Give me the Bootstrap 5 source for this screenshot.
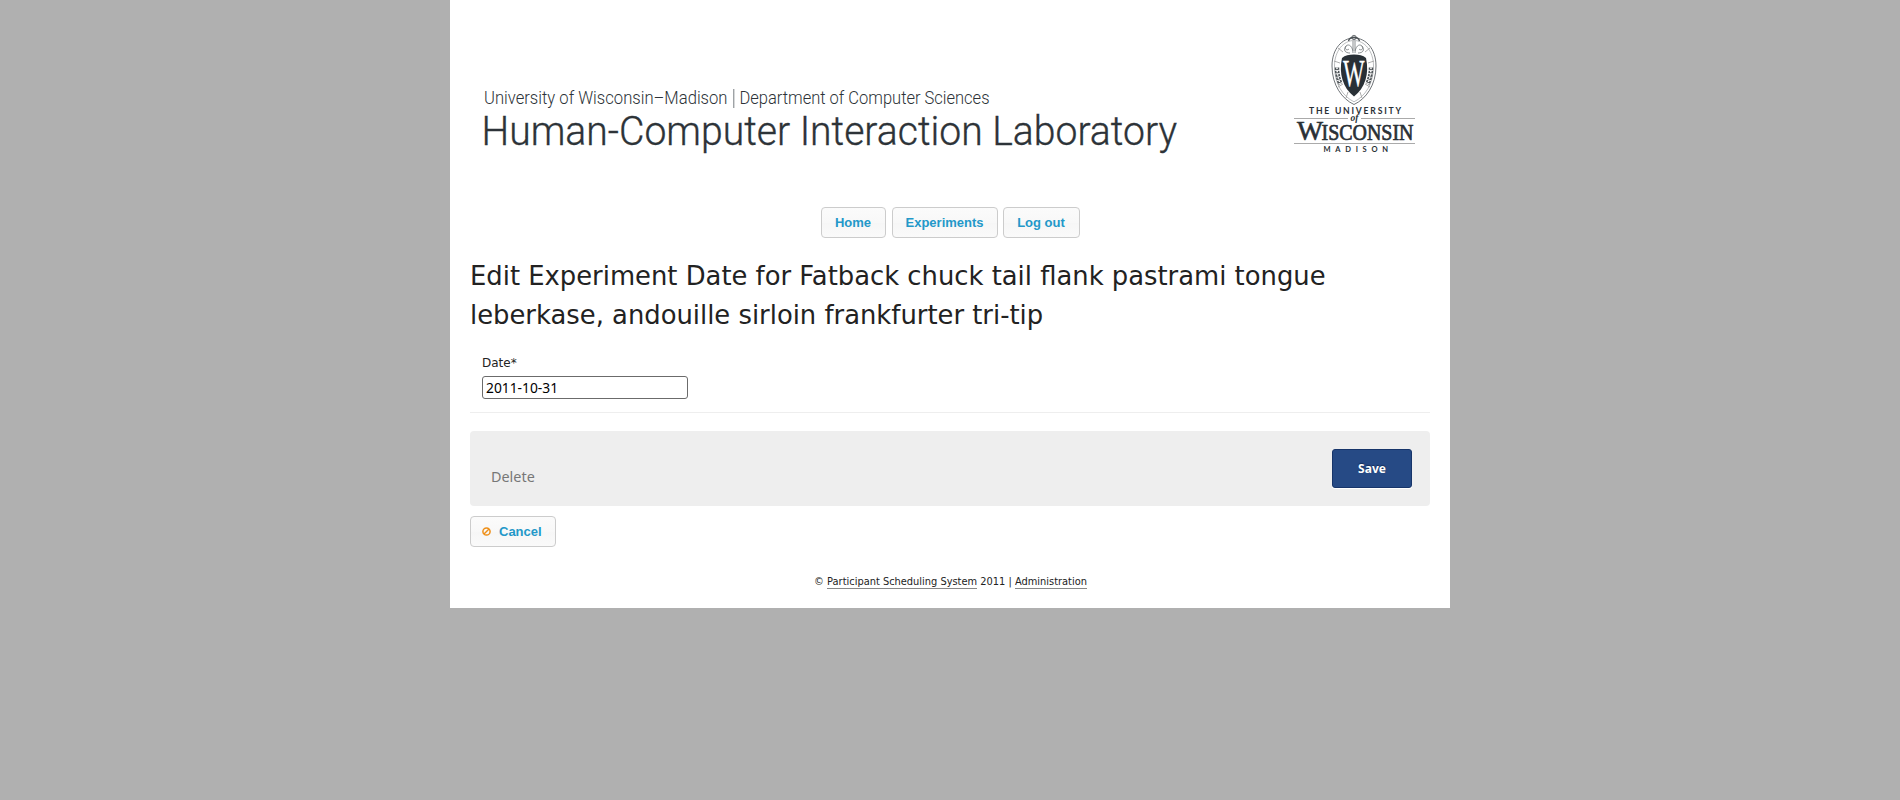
<!DOCTYPE html>
<html lang="en">
<head>
<meta charset="utf-8">
<title>Edit Experiment Date</title>
<link rel="stylesheet" href="https://cdn.jsdelivr.net/npm/bootstrap@5.3.0/dist/css/bootstrap.min.css">
<script src="https://cdn.jsdelivr.net/npm/bootstrap@5.3.0/dist/js/bootstrap.bundle.min.js"></script>
<style>
body{background:#b0b0b0;font-family:"DejaVu Sans",sans-serif;color:#222}
.page{width:1000px;height:608px;background:#fff;padding:0 20px}
.banner{display:block;width:1000px;height:207px;margin:0 -20px}
.btn-soft{font:bold 13px/29px "Liberation Sans",sans-serif;color:#2398c9;background:linear-gradient(#fbfbfb,#f8f8f8 50%,#f6f6f6 51%,#fafafa);border:1px solid #ccc;border-radius:4px;padding:0 13px;height:31px}
.btn-soft:hover{color:#17739b;border-color:#aaa}
.nav-home{width:65px}
.nav-exp{width:106px;margin:0 5px 0 6px}
.nav-out{width:77px}
.page-title{font-size:25.83px;line-height:39px;margin:19px 0 0;font-weight:400}
.date-row{padding:19px 12px 0}
.date-label{font-size:12px;line-height:18px}
.date-input{font:13.8px/19px "Noto Sans",sans-serif;color:#000;width:206px;height:23px;border:1px solid #6b6b6b;border-radius:3px;padding:0 3px;margin-top:4px}
.rule{border-top:1px solid #eee;margin-top:13px}
.actions{height:75px;background:#eee;border-radius:4px;margin-top:18px;padding:18px 18px 0 21px}
.delete-link{font:14.4px/20px "Noto Sans",sans-serif;color:#777;text-decoration:none;margin-top:18px}
.btn-save{font:bold 12px/37px "Noto Sans",sans-serif;color:#fff;background:#264a85;border:1px solid #17356a;border-radius:3px;width:80px;height:39px;padding:0;box-shadow:0 1px 0 #fff;text-shadow:0 -1px 1px #132d59}
.btn-save:hover{color:#fff;background:#1d3c70}
.cancel{margin-top:10px;padding-left:11px}
.foot{font-size:9.85px;line-height:15px;margin-top:27px;padding-left:1px}
.foot a{color:#222;text-decoration:none;border-bottom:1px solid #888;padding-bottom:1px}
</style>
</head>
<body>
<div class="page mx-auto">
<header>
<svg class="banner" viewBox="450 0 1000 207" role="img" aria-label="Human-Computer Interaction Laboratory">
<g font-family="Roboto, sans-serif" font-weight="300" fill="#2d3338">
<text x="484" y="104" font-size="17.800" textLength="243.500" lengthAdjust="spacingAndGlyphs">University of Wisconsin–Madison</text>
<path d="M733.800 89V108" stroke="#777d80"/>
<text x="739.500" y="104" font-size="17.800" textLength="250" lengthAdjust="spacingAndGlyphs">Department of Computer Sciences</text>
<text x="481.500" y="144.500" font-size="41.500" textLength="695.500" lengthAdjust="spacingAndGlyphs" stroke="#2d3338" stroke-width=".35">Human-Computer Interaction Laboratory</text>
</g>
<!-- university crest -->
<g fill="none" stroke="#4b5155" stroke-width=".8">
<path d="M1354 38C1342 38 1332 49 1332 66C1332 85 1342 99 1354 104.500C1366 99 1376 85 1376 66C1376 49 1366 38 1354 38Z"/>
<path d="M1354 40.500C1343.500 40.500 1334.500 51 1334.500 66C1334.500 84 1343 96.500 1354 101.800C1365 96.500 1373.500 84 1373.500 66C1373.500 51 1364.500 40.500 1354 40.500Z" stroke="#8d9193" stroke-width=".6"/>
<path d="M1334 61L1340 63M1374 61L1368 63M1338 48L1343 52M1370 48L1365 52M1338 87L1343 84M1370 87L1365 84M1346 98L1348 92M1362 98L1360 92" stroke="#999"/>
<path d="M1353 53C1353 47 1349 43 1346 46C1344 49 1347 51 1349 49M1355 53C1355 47 1359 43 1362 46C1364 49 1361 51 1359 49M1353 41V51M1355 41V51M1346 46C1343 50 1345 53 1350 53M1362 46C1365 50 1363 53 1358 53" stroke="#7d8285" stroke-width=".9"/>
<circle cx="1354" cy="37.500" r="2.200"/><path d="M1348.500 41C1350 36 1358 36 1359.500 41" stroke-width="1.300"/>
<path d="M1337 67.500Q1337 76 1340.500 84M1371 67.500Q1371 76 1367.500 84" stroke-width="4.500" stroke-dasharray="2.500 .8"/>
<path d="M1337 67.500Q1337 76 1340.500 84M1371 67.500Q1371 76 1367.500 84" stroke="#fff" stroke-width="1.500" stroke-dasharray="1.600 1.700"/>
</g>
<path d="M1354 54.500C1349 54.500 1345 55 1342 58C1338.500 74 1343 88 1354 96.500C1365 88 1369.500 74 1366 58C1363 55 1359 54.500 1354 54.500Z" fill="#293036"/>
<g font-family="'Liberation Serif', serif" fill="#293036">
<text transform="translate(1343 86) scale(.6 1)" font-size="38" fill="#fff" stroke="#fff" stroke-width=".3">W</text>
<g font-family="Lato, sans-serif" font-weight="700">
<text x="1309" y="114.300" font-size="8.600" textLength="92">THE UNIVERSITY</text>
<text x="1323.500" y="151.500" font-size="7.500" textLength="64.500">MADISON</text>
</g>
<path d="M1294 118.500H1348M1361 118.500H1415M1294 143.500H1415" stroke="#aaa"/>
<text x="1350.500" y="121" font-size="9.500" font-style="italic" font-weight="700">of</text>
<text x="1297" y="139.500" font-size="27" textLength="26" lengthAdjust="spacingAndGlyphs" stroke="#293036" stroke-width=".6">W</text>
<text x="1321.500" y="139.500" font-size="23" textLength="92" lengthAdjust="spacingAndGlyphs" stroke="#293036" stroke-width=".7">ISCONSIN</text>
</g>
</svg>
<nav class="d-flex justify-content-center">
<a class="btn btn-soft nav-home" href="#">Home</a>
<a class="btn btn-soft nav-exp" href="#">Experiments</a>
<a class="btn btn-soft nav-out" href="#">Log out</a>
</nav>
</header>
<main>
<h1 class="page-title">Edit Experiment Date for Fatback chuck tail flank pastrami tongue leberkase, andouille sirloin frankfurter tri-tip</h1>
<form>
<div class="d-flex flex-column align-items-start date-row">
<label class="date-label" for="date">Date*</label>
<input class="date-input" id="date" type="text" value="2011-10-31">
</div>
<div class="rule"></div>
<div class="actions d-flex justify-content-between align-items-start">
<a class="delete-link" href="#">Delete</a>
<button class="btn btn-save" type="button">Save</button>
</div>
</form>
<a class="btn btn-soft d-inline-flex align-items-center cancel" href="#">
<svg width="9" height="9" viewBox="0 0 9 9" class="me-2" fill="none" stroke="#ee8f18" stroke-width="1.500"><circle cx="4.500" cy="4.500" r="3.600"/><path d="M2 7L7 2"/></svg>Cancel</a>
</main>
<footer class="foot text-center">© <a href="#">Participant Scheduling System</a> 2011 | <a href="#">Administration</a></footer>
</div>
</body>
</html>
